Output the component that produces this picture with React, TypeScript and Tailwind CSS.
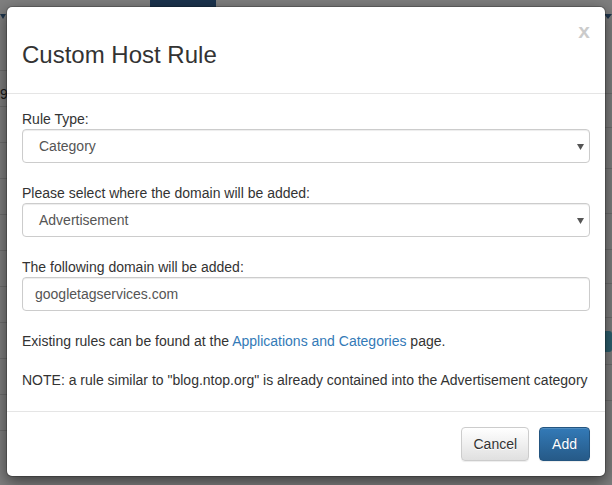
import React from 'react';

const leftRows = [
  { h: 21, text: '' },
  { h: 36, text: '9' },
  { h: 36, text: '' },
  { h: 36, text: '' },
  { h: 36, text: '' },
  { h: 36, text: '' },
  { h: 36, text: '' },
  { h: 36, text: '' },
  { h: 36, text: '' },
  { h: 36, text: '' },
  { h: 36, text: '' },
];

const rightRows = [
  { h: 44, text: '', kind: '' },
  { h: 34, text: '', kind: '' },
  { h: 41, text: '53', kind: 'link' },
  { h: 45, text: '', kind: '' },
  { h: 36, text: '18', kind: 'text' },
  { h: 34, text: 'y', kind: 'text' },
  { h: 34, text: 'P', kind: 'text' },
  { h: 47, text: '', kind: 'badge' },
  { h: 36, text: '', kind: '' },
];

function SelectBox({ value }: { value: string }) {
  return (
    <div className="h-[34px] w-full border border-[#ccc] rounded-[4px] shadow-[inset_0_1px_1px_rgba(0,0,0,0.075)] flex items-center justify-between pl-[16px] pr-[5px] text-[#555] bg-white">
      <span>{value}</span>
      <svg width="7" height="6" viewBox="0 0 7 6" className="mt-[1px]">
        <polygon points="0,0 7,0 3.5,6" fill="#555" />
      </svg>
    </div>
  );
}

export default function App() {
  return (
    <div className="relative w-[612px] h-[485px] overflow-hidden bg-white font-['Liberation_Sans',Arial,sans-serif] text-[14px] leading-[20px] text-[#333]">
      {/* page behind the dialog */}
      <div className="h-[50px] flex items-start">
        <svg width="6" height="5" viewBox="0 0 6 5" className="mt-[14px]">
          <polygon points="0,0 6,0 3,5" fill="#3d6a99" />
        </svg>
        <div className="ml-[144px] w-[66px] h-full bg-[#36679c]" />
        <div className="flex-1" />
        <svg width="8" height="5" viewBox="0 0 8 5" className="mt-[14px]">
          <polygon points="0,0 8,0 4,5" fill="#3d6a99" />
        </svg>
      </div>
      <div className="flex">
        <div className="w-[120px] border-r border-[#ddd]">
          {leftRows.map((r, i) => (
            <div key={i} style={{ height: r.h }} className="border-b border-[#ddd] flex items-end pb-[2px]">
              {r.text && <span className="text-[#333]">{r.text}</span>}
            </div>
          ))}
        </div>
        <div className="flex-1">
          {rightRows.map((r, i) => (
            <div key={i} style={{ height: r.h }} className="border-b border-[#ddd] flex items-center pl-[485px] whitespace-nowrap">
              {r.kind === 'link' && <span className="text-[#337ab7]">{r.text}</span>}
              {r.kind === 'text' && <span className="text-[#333]">{r.text}</span>}
              {r.kind === 'badge' && <span className="h-[21px] w-[60px] bg-[#5bc0de] rounded-[3px]" />}
            </div>
          ))}
        </div>
      </div>

      {/* backdrop */}
      <div className="absolute inset-0 bg-black/50" />

      {/* dialog */}
      <div className="absolute left-[6px] top-[6px] w-[600px] bg-white bg-clip-padding border border-black/20 rounded-[6px] shadow-[0_5px_15px_rgba(0,0,0,0.5)]">
        <div className="p-[15px] border-b border-[#e5e5e5]">
          <button className="float-right -mt-[2px] text-[21px] leading-none font-bold text-black opacity-20">
            x
          </button>
          <h3 className="mt-[20px] mb-[10px] text-[24px] leading-[1.1] font-medium text-[#333]">
            Custom Host Rule
          </h3>
        </div>

        <div className="px-[15px] pt-[15px] pb-[15px]">
          <div className="mb-[20px]">
            <label className="block">Rule Type:</label>
            <SelectBox value="Category" />
          </div>
          <div className="mb-[20px]">
            <label className="block">Please select where the domain will be added:</label>
            <SelectBox value="Advertisement" />
          </div>
          <div className="mb-[20px]">
            <label className="block">The following domain will be added:</label>
            <div className="h-[34px] w-full border border-[#ccc] rounded-[4px] shadow-[inset_0_1px_1px_rgba(0,0,0,0.075)] flex items-center px-[12px] text-[#555]">
              googletagservices.com
            </div>
          </div>
          <p className="mb-[19px]">
            Existing rules can be found at the <a className="text-[#337ab7]">Applications and Categories</a> page.
          </p>
          <p className="mb-[6px]">
            NOTE: a rule similar to "blog.ntop.org" is already contained into the Advertisement category
          </p>
        </div>

        <div className="p-[15px] border-t border-[#e5e5e5] flex justify-end gap-[10px]">
          <button className="h-[34px] px-[11px] rounded-[4px] border border-[#ccc] bg-linear-to-b from-white to-[#e0e0e0] text-[#333] shadow-[inset_0_1px_0_rgba(255,255,255,0.15),0_1px_1px_rgba(0,0,0,0.075)] [text-shadow:0_1px_0_#fff]">
            Cancel
          </button>
          <button className="h-[34px] px-[12px] rounded-[4px] border border-[#245580] bg-linear-to-b from-[#337ab7] to-[#265a88] text-white shadow-[inset_0_1px_0_rgba(255,255,255,0.15),0_1px_1px_rgba(0,0,0,0.075)] [text-shadow:0_-1px_0_rgba(0,0,0,0.2)]">
            Add
          </button>
        </div>
      </div>
    </div>
  );
}
